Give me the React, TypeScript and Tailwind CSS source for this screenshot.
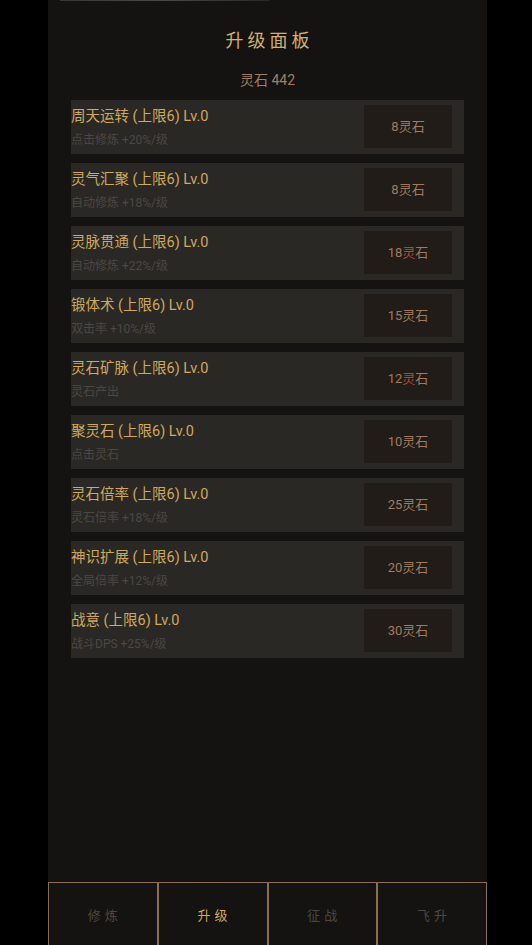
const upgrades = [
  { name: '周天运转', desc: '点击修炼 +20%/级', cost: 8 },
  { name: '灵气汇聚', desc: '自动修炼 +18%/级', cost: 8 },
  { name: '灵脉贯通', desc: '自动修炼 +22%/级', cost: 18, hot: true },
  { name: '锻体术', desc: '双击率 +10%/级', cost: 15 },
  { name: '灵石矿脉', desc: '灵石产出', cost: 12, hot: true },
  { name: '聚灵石', desc: '点击灵石', cost: 10 },
  { name: '灵石倍率', desc: '灵石倍率 +18%/级', cost: 25 },
  { name: '神识扩展', desc: '全局倍率 +12%/级', cost: 20 },
  { name: '战意', desc: '战斗DPS +25%/级', cost: 30 },
];

const tabs = ['修炼', '升级', '征战', '飞升'];

export default function App() {
  return (
    <div
      className="h-[945px] overflow-hidden bg-black"
      style={{ fontFamily: 'Roboto, "Noto Sans CJK SC", sans-serif' }}
    >
      <div className="ml-[48px] w-[439px] h-[949px] bg-[#151311] flex flex-col">
        {/* faint scroll indicator */}
        <div className="h-px ml-[12px] w-[210px] bg-gradient-to-r from-[#3a3835] via-[#4a4845] to-[#2a2826]" />

        <h1 className="mt-[29px] text-center text-[18px] leading-[22px] tracking-[4px] pl-[4px] text-[#d4b16a]">
          升级面板
        </h1>
        <p className="mt-[18px] text-center text-[14px] leading-[20px] text-[#a27d62]">灵石 442</p>

        <div className="mt-[10px] mx-[23px] flex flex-col gap-[9.5px]">
          {upgrades.map((u) => (
            <div key={u.name} className="h-[53.5px] bg-[#2a2825] flex items-center justify-between pr-[12px]">
              <div className="flex flex-col pt-[2px]">
                <span className="text-[14.5px] leading-[20px] text-[#cfa95c]">
                  {u.name} (上限6) Lv.0
                </span>
                <span className="mt-[5px] text-[12px] leading-[16px] text-[#4b4743]">{u.desc}</span>
              </div>
              <button className="w-[88px] h-[43px] bg-[#221c18] text-[13px] text-[#a07a60]">
                {u.cost}
                <span className={u.hot ? 'text-[#b04a35]' : ''}>灵</span>石
              </button>
            </div>
          ))}
        </div>

        <div className="mt-auto grid grid-cols-4 h-[67px]">
          {tabs.map((t) => (
            <button
              key={t}
              className={`border-[1.5px] border-[#8a6f4e] bg-[#151311] text-[13px] tracking-[4px] pl-[4px] ${
                t === '升级' ? 'text-[#cfa95c]' : 'text-[#4b4743]'
              }`}
            >
              {t}
            </button>
          ))}
        </div>
      </div>
    </div>
  );
}
